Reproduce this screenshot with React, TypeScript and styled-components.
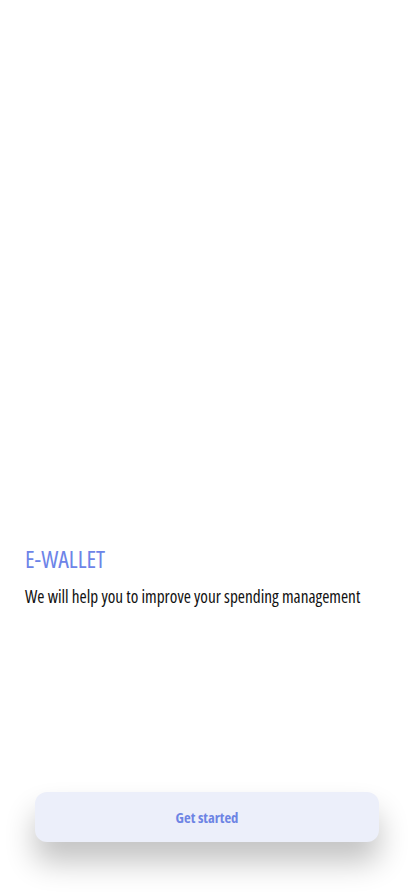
import React from "react";
import styled, { createGlobalStyle } from "styled-components";

const Global = createGlobalStyle`
  html, body { margin: 0; padding: 0; background: #ffffff; }
  * { box-sizing: border-box; }
`;

const FONT = `"Open Sans", "Roboto Condensed", sans-serif`;

const Screen = styled.main`
  height: 100vh;
  display: flex;
  flex-direction: column;
  background: #ffffff;
  font-family: ${FONT};
  font-stretch: 75%;
`;

const Hero = styled.div`
  flex: 1;
`;

const Intro = styled.section`
  padding: 0 25px;
  display: flex;
  flex-direction: column;
  gap: 12px;
`;

const Title = styled.h1`
  margin: 0;
  font-size: 24px;
  line-height: 30px;
  font-weight: 500;
  font-stretch: 75%;
  color: #6d84e8;
`;

const Subtitle = styled.p`
  margin: 0;
  font-size: 17.3px;
  line-height: 22px;
  font-weight: 500;
  font-stretch: 75%;
  color: #111111;
`;

const Footer = styled.div`
  height: 288px;
  display: flex;
  align-items: flex-end;
  justify-content: center;
  padding-bottom: 54px;
`;

const Button = styled.button`
  width: 344px;
  height: 50px;
  border: none;
  border-radius: 12px;
  background: #eceffa;
  color: #6d84e4;
  font-family: ${FONT};
  font-stretch: 75%;
  font-size: 14.6px;
  font-weight: 700;
  box-shadow: 0 20px 30px rgba(0, 0, 0, 0.24);
  cursor: pointer;
`;

export default function App() {
  return (
    <>
      <Global />
      <Screen>
        <Hero />
        <Intro>
          <Title>E-WALLET</Title>
          <Subtitle>We will help you to improve your spending management</Subtitle>
        </Intro>
        <Footer>
          <Button>Get started</Button>
        </Footer>
      </Screen>
    </>
  );
}
